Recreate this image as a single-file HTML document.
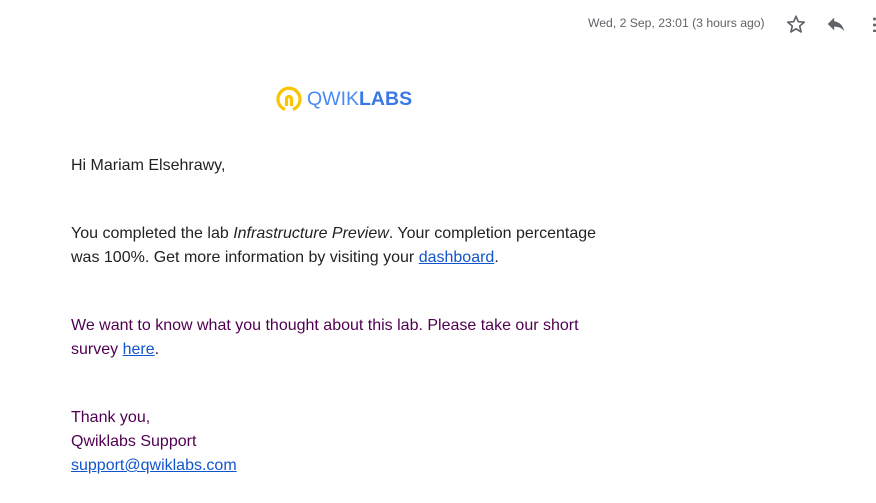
<!DOCTYPE html>
<html><head><meta charset="utf-8"><style>
body{margin:0;width:876px;height:503px;background:#fff;font-family:"Liberation Sans",Arial,sans-serif;overflow:hidden;position:relative}
.t{position:absolute;left:71px;font-size:16px;line-height:24px;color:#222}
.p{color:#500050}
a{color:#1155cc;text-decoration:underline}
</style></head><body>
<div style="position:absolute;left:588px;top:16px;font-size:12.2px;color:#5f6368;">Wed, 2 Sep, 23:01 (3 hours ago)</div>
<svg style="position:absolute;left:785px;top:13px" width="22" height="22" viewBox="0 0 24 24"><path d="M12 3.5l2.5 6 6.5.5-5 4.3 1.6 6.4L12 17.3l-5.6 3.4L8 14.3 3 10l6.5-.5z" fill="none" stroke="#5f6368" stroke-width="1.8" stroke-linejoin="round"/></svg>
<svg style="position:absolute;left:825px;top:13px" width="22" height="22" viewBox="0 0 24 24"><path d="M10 9V5l-7 7 7 7v-4.1c5 0 8.5 1.6 11 5.1-1-5-4-10-11-11z" fill="#5f6368"/></svg>
<div style="position:absolute;left:873px;top:16px;width:3px;height:16px;background:radial-gradient(circle,#5f6368 1.4px,transparent 1.6px) 0 0/3px 6px repeat-y"></div>
<svg style="position:absolute;left:276px;top:86px" width="26" height="26" viewBox="0 0 26 26"><path d="M9 23.5A11 11 0 1 1 17 23.5" fill="none" stroke="#fbc400" stroke-width="3.2"/><path d="M10.5 20V13a2.5 2.5 0 0 1 5 0v7" fill="none" stroke="#fbc400" stroke-width="3.2"/></svg>
<div style="position:absolute;left:307px;top:87px;font-size:19.5px;line-height:24px;color:#4a8af4;">QWIK<b style="color:#3b78e7">LABS</b></div>
<div class="t" style="top:154px">Hi Mariam Elsehrawy,</div>
<div class="t" style="top:222px">You completed the lab <i>Infrastructure Preview</i>. Your completion percentage<br>was 100%. Get more information by visiting your <a>dashboard</a>.</div>
<div class="t p" style="top:314px">We want to know what you thought about this lab. Please take our short<br>survey <a>here</a>.</div>
<div class="t p" style="top:406px">Thank you,<br>Qwiklabs Support<br><a>support@qwiklabs.com</a></div>
</body></html>
